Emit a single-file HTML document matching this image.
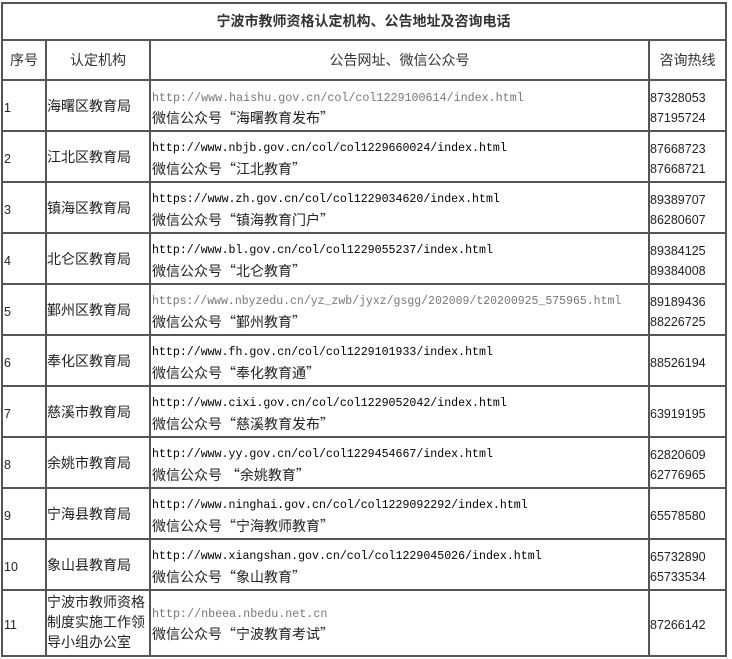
<!DOCTYPE html>
<html><head><meta charset="utf-8">
<style>
body{margin:0;background:#fff;width:732px;height:659px;position:relative;overflow:hidden;font-family:"Liberation Sans","Noto Sans CJK SC",sans-serif;color:#222}
.v{position:absolute;width:2px;background:#555;top:2px;}
.h{position:absolute;height:2px;background:#555;left:1px;width:726px}
.t{position:absolute;white-space:nowrap;font-size:14px;line-height:20px}
.u{position:absolute;white-space:nowrap;font-family:"Liberation Mono",monospace;font-size:11.6px;line-height:20px;color:#000;margin-top:2px}
.g{color:#777;font-size:11.7px}
.n{position:absolute;white-space:nowrap;font-size:12.5px;line-height:20px;color:#222;margin-top:2px}
.w{margin-top:2px}
q{quotes:none;font-family:"Noto Sans CJK SC",sans-serif}
</style></head><body>
<div class="h" style="top:2px"></div>
<div class="h" style="top:39px"></div>
<div class="h" style="top:79px"></div>
<div class="h" style="top:130px"></div>
<div class="h" style="top:181px"></div>
<div class="h" style="top:232px"></div>
<div class="h" style="top:283px"></div>
<div class="h" style="top:334px"></div>
<div class="h" style="top:385px"></div>
<div class="h" style="top:436px"></div>
<div class="h" style="top:487px"></div>
<div class="h" style="top:538px"></div>
<div class="h" style="top:589px"></div>
<div class="h" style="top:655px"></div>
<div class="v" style="left:1px;height:655px"></div>
<div class="v" style="left:725px;height:655px"></div>
<div class="v" style="left:45px;top:39px;height:618px"></div>
<div class="v" style="left:149px;top:39px;height:618px"></div>
<div class="v" style="left:648px;top:39px;height:618px"></div>

<div class="t" style="left:0;width:727px;text-align:center;top:11px;font-weight:bold;color:#333">宁波市教师资格认定机构、公告地址及咨询电话</div>
<div class="t" style="left:3px;width:42px;text-align:center;top:50px;color:#333">序号</div>
<div class="t" style="left:47px;width:102px;text-align:center;top:50px;color:#333">认定机构</div>
<div class="t" style="left:151px;width:497px;text-align:center;top:50px;color:#333">公告网址、微信公众号</div>
<div class="t" style="left:650px;width:75px;text-align:center;top:50px;color:#333">咨询热线</div>

<div class="n" style="left:4px;top:96px">1</div><div class="t" style="left:47px;top:96px">海曙区教育局</div>
<div class="u g" style="left:152px;top:86px">http://www.haishu.gov.cn/col/col1229100614/index.html</div>
<div class="t w" style="left:152px;top:106px">微信公众号<q>“海曙教育发布”</q></div>
<div class="n" style="left:650px;top:86px">87328053</div><div class="n" style="left:650px;top:106px">87195724</div>

<div class="n" style="left:4px;top:147px">2</div><div class="t" style="left:47px;top:147px">江北区教育局</div>
<div class="u" style="left:152px;top:137px">http://www.nbjb.gov.cn/col/col1229660024/index.html</div>
<div class="t w" style="left:152px;top:157px">微信公众号<q>“江北教育”</q></div>
<div class="n" style="left:650px;top:137px">87668723</div><div class="n" style="left:650px;top:157px">87668721</div>

<div class="n" style="left:4px;top:198px">3</div><div class="t" style="left:47px;top:198px">镇海区教育局</div>
<div class="u" style="left:152px;top:188px">https://www.zh.gov.cn/col/col1229034620/index.html</div>
<div class="t w" style="left:152px;top:208px">微信公众号<q>“镇海教育门户”</q></div>
<div class="n" style="left:650px;top:188px">89389707</div><div class="n" style="left:650px;top:208px">86280607</div>

<div class="n" style="left:4px;top:249px">4</div><div class="t" style="left:47px;top:249px">北仑区教育局</div>
<div class="u" style="left:152px;top:239px">http://www.bl.gov.cn/col/col1229055237/index.html</div>
<div class="t w" style="left:152px;top:259px">微信公众号<q>“北仑教育”</q></div>
<div class="n" style="left:650px;top:239px">89384125</div><div class="n" style="left:650px;top:259px">89384008</div>

<div class="n" style="left:4px;top:300px">5</div><div class="t" style="left:47px;top:300px">鄞州区教育局</div>
<div class="u g" style="left:152px;top:290px;font-size:11.5px">https://www.nbyzedu.cn/yz_zwb/jyxz/gsgg/202009/t20200925_575965.html</div>
<div class="t w" style="left:152px;top:310px">微信公众号<q>“鄞州教育”</q></div>
<div class="n" style="left:650px;top:290px">89189436</div><div class="n" style="left:650px;top:310px">88226725</div>

<div class="n" style="left:4px;top:351px">6</div><div class="t" style="left:47px;top:351px">奉化区教育局</div>
<div class="u" style="left:152px;top:341px">http://www.fh.gov.cn/col/col1229101933/index.html</div>
<div class="t w" style="left:152px;top:361px">微信公众号<q>“奉化教育通”</q></div>
<div class="n" style="left:650px;top:351px">88526194</div>

<div class="n" style="left:4px;top:402px">7</div><div class="t" style="left:47px;top:402px">慈溪市教育局</div>
<div class="u" style="left:152px;top:392px">http://www.cixi.gov.cn/col/col1229052042/index.html</div>
<div class="t w" style="left:152px;top:412px">微信公众号<q>“慈溪教育发布”</q></div>
<div class="n" style="left:650px;top:402px">63919195</div>

<div class="n" style="left:4px;top:453px">8</div><div class="t" style="left:47px;top:453px">余姚市教育局</div>
<div class="u" style="left:152px;top:443px">http://www.yy.gov.cn/col/col1229454667/index.html</div>
<div class="t w" style="left:152px;top:463px">微信公众号 <q>“余姚教育”</q></div>
<div class="n" style="left:650px;top:443px">62820609</div><div class="n" style="left:650px;top:463px">62776965</div>

<div class="n" style="left:4px;top:504px">9</div><div class="t" style="left:47px;top:504px">宁海县教育局</div>
<div class="u" style="left:152px;top:494px">http://www.ninghai.gov.cn/col/col1229092292/index.html</div>
<div class="t w" style="left:152px;top:514px">微信公众号<q>“宁海教师教育”</q></div>
<div class="n" style="left:650px;top:504px">65578580</div>

<div class="n" style="left:4px;top:555px">10</div><div class="t" style="left:47px;top:555px">象山县教育局</div>
<div class="u" style="left:152px;top:545px">http://www.xiangshan.gov.cn/col/col1229045026/index.html</div>
<div class="t w" style="left:152px;top:565px">微信公众号<q>“象山教育”</q></div>
<div class="n" style="left:650px;top:545px">65732890</div><div class="n" style="left:650px;top:565px">65733534</div>

<div class="n" style="left:4px;top:613px">11</div>
<div class="t" style="left:47px;top:592px">宁波市教师资格</div>
<div class="t" style="left:47px;top:612px">制度实施工作领</div>
<div class="t" style="left:47px;top:632px">导小组办公室</div>
<div class="u g" style="left:152px;top:602px">http://nbeea.nbedu.net.cn</div>
<div class="t w" style="left:152px;top:622px">微信公众号<q>“宁波教育考试”</q></div>
<div class="n" style="left:650px;top:613px">87266142</div>
</body></html>
